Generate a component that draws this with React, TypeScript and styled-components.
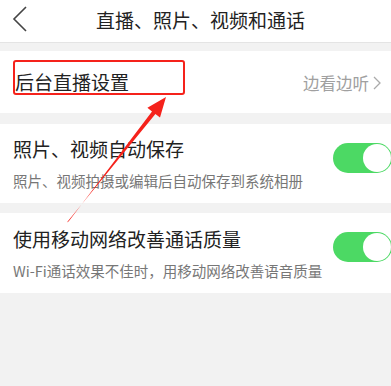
import React from "react";
import styled, { createGlobalStyle } from "styled-components";

const Global = createGlobalStyle`
  html, body { margin: 0; padding: 0; background: #f2f2f2; }
  body { font-family: "Noto Sans CJK SC", "Noto Sans", sans-serif; }
`;

const Page = styled.div`
  position: relative;
  width: 391px;
  height: 386px;
  background: #f2f2f2;
  overflow: hidden;
  display: flex;
  flex-direction: column;
`;

const Header = styled.div`
  height: 42px;
  background: #fff;
  border-bottom: 1px solid #e4e4e4;
  display: flex;
  align-items: center;
  justify-content: center;
  position: relative;
  flex-shrink: 0;
`;

const BackBtn = styled.div`
  position: absolute;
  left: 12px;
  top: 5px;
  width: 20px;
  height: 28px;
  display: flex;
  align-items: center;
`;

const Title = styled.div`
  font-size: 19px;
  color: #222;
  line-height: 1;
  margin-top: -4px;
  margin-left: 10px;
`;

const Card = styled.div<{ $h: number; $mt: number }>`
  margin-top: ${(p) => p.$mt}px;
  height: ${(p) => p.$h}px;
  background: #fff;
  display: flex;
  align-items: center;
  padding: 0 0 0 13px;
  flex-shrink: 0;
`;

const TextCol = styled.div`
  flex: 1;
  display: flex;
  flex-direction: column;
`;

const RowTitle = styled.div<{ $inset?: boolean }>`
  font-size: 19px;
  color: #222;
  line-height: 24px;
  margin-left: ${(p) => (p.$inset ? 2 : 0)}px;
`;

const RowSub = styled.div`
  font-size: 14.5px;
  color: #777;
  line-height: 18px;
  margin-top: 11px;
`;

const RightLink = styled.div`
  display: flex;
  align-items: center;
  gap: 4px;
  font-size: 16.5px;
  color: #a0a0a0;
  margin-right: 10px;
  margin-top: 2px;
`;

const Toggle = styled.div`
  width: 59px;
  height: 30px;
  border-radius: 15px;
  background: #4cd964;
  position: relative;
  margin-right: -1px;
  margin-top: -12px;
  flex-shrink: 0;
`;

const Knob = styled.div`
  position: absolute;
  right: 1px;
  top: 1px;
  width: 28px;
  height: 28px;
  border-radius: 50%;
  background: #fff;
`;

const RedBox = styled.div`
  position: absolute;
  left: 13px;
  top: 60px;
  width: 168px;
  height: 31px;
  border: 2px solid #f5221b;
  border-radius: 3px;
  pointer-events: none;
`;

const ArrowLayer = styled.svg`
  position: absolute;
  left: 0;
  top: 0;
  pointer-events: none;
`;

export default function App() {
  return (
    <Page>
      <Global />
      <Header>
        <BackBtn>
          <svg width="16" height="26" viewBox="0 0 16 26">
            <path d="M14 1 L2 13 L14 25" fill="none" stroke="#444" strokeWidth="1.6" />
          </svg>
        </BackBtn>
        <Title>直播、照片、视频和通话</Title>
      </Header>
      <Card $h={62} $mt={8}>
        <TextCol>
          <RowTitle $inset>后台直播设置</RowTitle>
        </TextCol>
        <RightLink>
          边看边听
          <svg width="8" height="14" viewBox="0 0 8 14">
            <path d="M1 1 L7 7 L1 13" fill="none" stroke="#aaa" strokeWidth="1.3" />
          </svg>
        </RightLink>
      </Card>
      <Card $h={79} $mt={11}>
        <TextCol>
          <RowTitle>照片、视频自动保存</RowTitle>
          <RowSub>照片、视频拍摄或编辑后自动保存到系统相册</RowSub>
        </TextCol>
        <Toggle>
          <Knob />
        </Toggle>
      </Card>
      <Card $h={80} $mt={10}>
        <TextCol>
          <RowTitle>使用移动网络改善通话质量</RowTitle>
          <RowSub>Wi-Fi通话效果不佳时，用移动网络改善语音质量</RowSub>
        </TextCol>
        <Toggle>
          <Knob />
        </Toggle>
      </Card>
      <RedBox />
      <ArrowLayer width="391" height="386" viewBox="0 0 391 386">
        <polygon
          points="66.8,222.4 68.8,221.2 152,111.4 147.4,107.8 166,97 160,117.6 155.4,114"
          fill="#f5221b"
        />
      </ArrowLayer>
    </Page>
  );
}
